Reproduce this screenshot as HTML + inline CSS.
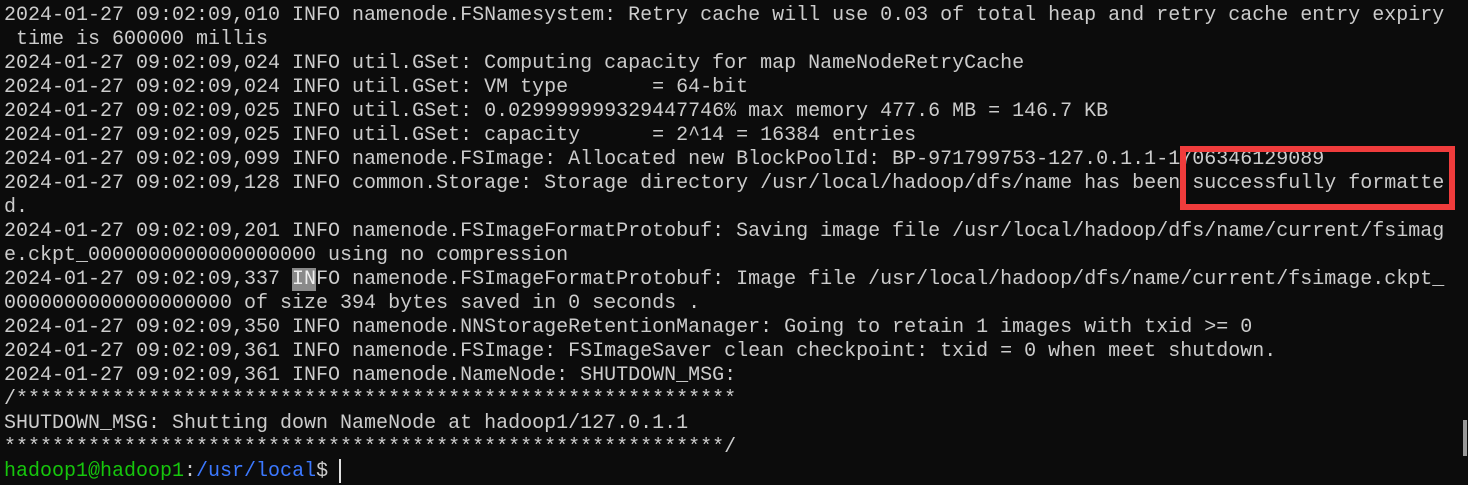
<!DOCTYPE html>
<html><head><style>
html,body{margin:0;padding:0;background:#0c0c0c;width:1468px;height:485px;overflow:hidden}
pre{margin:0;position:absolute;left:4px;top:4px;font-family:"Liberation Mono",monospace;font-size:20px;line-height:24px;color:#cccccc;white-space:pre}
.sel{background:#8a8a8a;color:#f0f0f0}
.g{color:#16c60c}.b{color:#3b78ff}
.box{position:absolute;left:1180px;top:146px;width:263px;height:52px;border:6px solid #f03c3c}
.cur{position:absolute;left:339px;top:459px;width:2px;height:24px;background:#e0e0e0}
.sb{position:absolute;left:1463px;top:420px;width:4px;height:36px;background:#9a9a9a}
</style></head><body>
<pre>2024-01-27 09:02:09,010 INFO namenode.FSNamesystem: Retry cache will use 0.03 of total heap and retry cache entry expiry
 time is 600000 millis
2024-01-27 09:02:09,024 INFO util.GSet: Computing capacity for map NameNodeRetryCache
2024-01-27 09:02:09,024 INFO util.GSet: VM type       = 64-bit
2024-01-27 09:02:09,025 INFO util.GSet: 0.029999999329447746% max memory 477.6 MB = 146.7 KB
2024-01-27 09:02:09,025 INFO util.GSet: capacity      = 2^14 = 16384 entries
2024-01-27 09:02:09,099 INFO namenode.FSImage: Allocated new BlockPoolId: BP-971799753-127.0.1.1-1706346129089
2024-01-27 09:02:09,128 INFO common.Storage: Storage directory /usr/local/hadoop/dfs/name has been successfully formatte
d.
2024-01-27 09:02:09,201 INFO namenode.FSImageFormatProtobuf: Saving image file /usr/local/hadoop/dfs/name/current/fsimag
e.ckpt_0000000000000000000 using no compression
2024-01-27 09:02:09,337 <span class="sel">IN</span>FO namenode.FSImageFormatProtobuf: Image file /usr/local/hadoop/dfs/name/current/fsimage.ckpt_
0000000000000000000 of size 394 bytes saved in 0 seconds .
2024-01-27 09:02:09,350 INFO namenode.NNStorageRetentionManager: Going to retain 1 images with txid &gt;= 0
2024-01-27 09:02:09,361 INFO namenode.FSImage: FSImageSaver clean checkpoint: txid = 0 when meet shutdown.
2024-01-27 09:02:09,361 INFO namenode.NameNode: SHUTDOWN_MSG:
/************************************************************
SHUTDOWN_MSG: Shutting down NameNode at hadoop1/127.0.1.1
************************************************************/
<span class="g">hadoop1@hadoop1</span>:<span class="b">/usr/local</span>$ </pre>
<div class="box"></div>
<div class="cur"></div>
<div class="sb"></div>
</body></html>
